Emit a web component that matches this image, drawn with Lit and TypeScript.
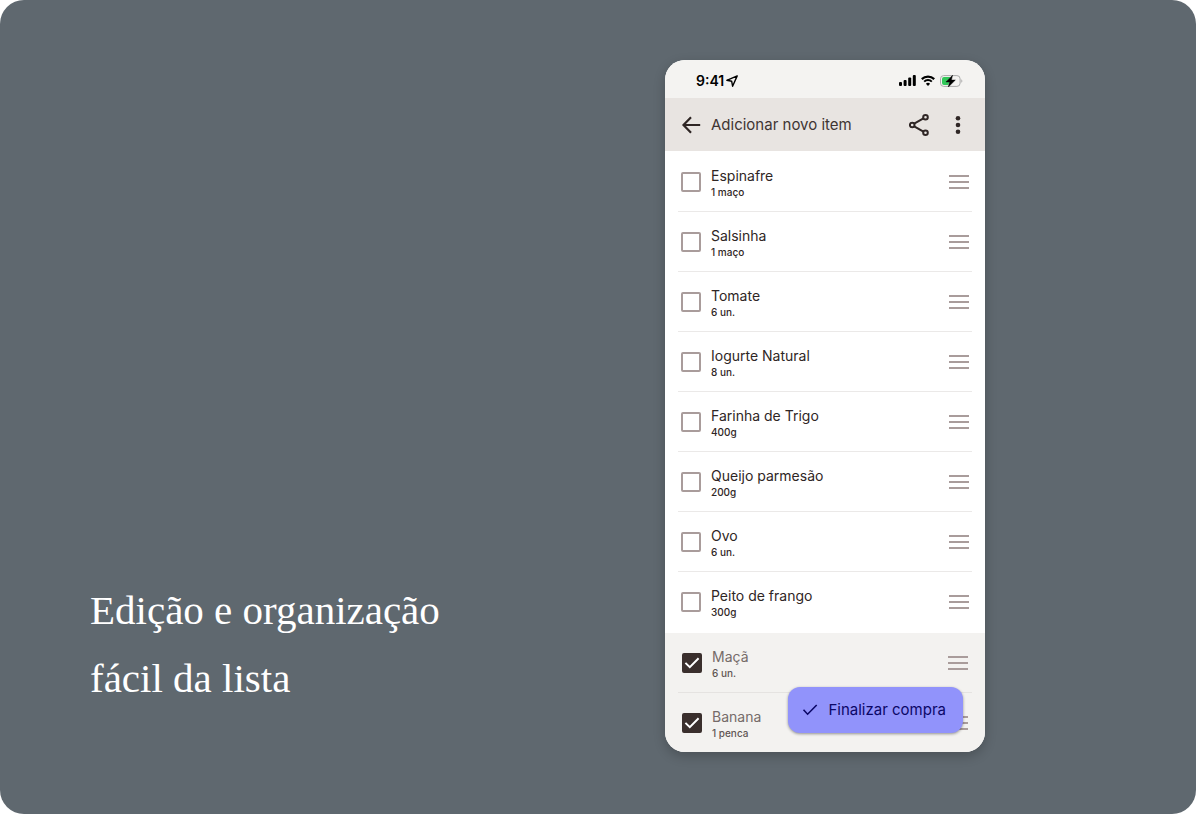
import { LitElement, html, css } from "lit";
import { customElement, property, state } from "lit/decorators.js";

interface Item {
  name: string;
  amount: string;
  done: boolean;
}

const ITEMS: Item[] = [
  { name: "Espinafre", amount: "1 maço", done: false },
  { name: "Salsinha", amount: "1 maço", done: false },
  { name: "Tomate", amount: "6 un.", done: false },
  { name: "Iogurte Natural", amount: "8 un.", done: false },
  { name: "Farinha de Trigo", amount: "400g", done: false },
  { name: "Queijo parmesão", amount: "200g", done: false },
  { name: "Ovo", amount: "6 un.", done: false },
  { name: "Peito de frango", amount: "300g", done: false },
  { name: "Maçã", amount: "6 un.", done: true },
  { name: "Banana", amount: "1 penca", done: true },
];

@customElement("shopping-row")
class ShoppingRow extends LitElement {
  @property({ attribute: false }) item!: Item;

  static styles = css`
    :host {
      display: block;
    }
    .row {
      display: flex;
      align-items: center;
      justify-content: space-between;
      height: 59px;
    }
    .entry {
      display: flex;
      align-items: center;
      gap: 10px;
    }
    .box {
      display: grid;
      place-items: center;
      width: 20px;
      height: 20px;
    }
    .box > * {
      grid-area: 1 / 1;
    }
    .tick {
      appearance: none;
      box-sizing: border-box;
      width: 20px;
      height: 20px;
      margin: 0;
      border: 2px solid #a99c9b;
      border-radius: 2px;
      background: transparent;
    }
    .tick:checked {
      border-color: #3a2f2d;
      background: #3a2f2d;
    }
    .mark {
      pointer-events: none;
    }
    .texts {
      display: flex;
      flex-direction: column;
      padding-top: 2px;
      color: #2f2625;
    }
    .name {
      font-size: 14px;
      line-height: 18px;
    }
    .amount {
      font-size: 10px;
      line-height: 14px;
      font-weight: 500;
    }
    .done {
      color: #756b69;
    }
    .done .amount {
      color: #5f5553;
    }
    .handle {
      display: block;
      padding: 0;
      border: 0;
      background: none;
    }
    .handle svg {
      display: block;
    }
  `;

  render() {
    const { name, amount, done } = this.item;
    return html`
      <div class="row">
        <label class="entry">
          <span class="box">
            <input
              class="tick"
              type="checkbox"
              .checked=${done}
              @change=${this.toggle}
            />
            ${done
              ? html`<svg class="mark" width="20" height="20" viewBox="0 0 20 20" fill="none" aria-hidden="true">
                  <path d="M3.4 9.9 7.800 14.200 16.600 5.300" stroke="#fff" stroke-width="2" />
                </svg>`
              : ""}
          </span>
          <span class="texts ${done ? "done" : ""}">
            <span class="name">${name}</span>
            <span class="amount">${amount}</span>
          </span>
        </label>
        <button class="handle" aria-label="Mover ${name}">
          <svg width="20" height="14" viewBox="0 0 20 14" aria-hidden="true">
            <path d="M0 0h20v2H0zM0 6h20v2H0zM0 12h20v2H0z" fill="#a99c9b" />
          </svg>
        </button>
      </div>
    `;
  }

  private toggle() {
    this.dispatchEvent(new CustomEvent("toggle-item", { detail: this.item }));
  }
}

@customElement("app-root")
class AppRoot extends LitElement {
  @state() private items: Item[] = ITEMS;

  static styles = css`
    :host {
      display: block;
      background: #fff;
      font-family: Inter, "Noto Sans", sans-serif;
    }
    .stage {
      box-sizing: border-box;
      display: flex;
      justify-content: space-between;
      align-items: center;
      gap: 40px;
      min-height: 100vh;
      padding: 60px 211px 62px 90px;
      border-radius: 24px;
      background: #5f686f;
    }
    .title {
      align-self: flex-end;
      max-width: 400px;
      margin: 0 0 40px;
      color: #fff;
      font: 400 41px/68px "Liberation Serif", serif;
    }
    .phone {
      position: relative;
      flex: none;
      width: 320px;
      border-radius: 20px;
      overflow: hidden;
      background: #fff;
      box-shadow: 0 4px 12px rgba(0, 0, 0, 0.22);
    }
    .status {
      display: flex;
      align-items: center;
      justify-content: space-between;
      height: 38px;
      padding: 3px 22px 0 31px;
      box-sizing: border-box;
      background: #f4f3f1;
      color: #000;
      font-size: 14px;
      font-weight: 600;
    }
    .cluster {
      display: flex;
      align-items: center;
      gap: 5px;
    }
    .clock {
      gap: 2px;
    }
    .bar {
      display: flex;
      align-items: center;
      height: 53px;
      padding: 0 17px 0 16px;
      box-sizing: border-box;
      background: #e8e4e1;
    }
    .bar input {
      flex: 1;
      min-width: 0;
      margin: 0 10px;
      padding: 0;
      border: 0;
      outline: 0;
      background: none;
      color: #3f3533;
      font: 400 15px/20px Inter, "Noto Sans", sans-serif;
    }
    .bar input::placeholder {
      color: #3f3533;
      opacity: 1;
    }
    .icon {
      display: grid;
      place-items: center;
      width: 20px;
      height: 24px;
      padding: 0;
      border: 0;
      background: none;
    }
    .actions {
      display: flex;
      gap: 19px;
    }
    .list {
      margin: 0;
      padding: 1px 13px;
      list-style: none;
    }
    .list li {
      padding: 0 3px;
      border-bottom: 1px solid #ebe9e8;
    }
    .list li:last-child {
      border-color: transparent;
    }
    .list.checked {
      padding: 0 13px;
      background: #f3f2f0;
    }
    .checked li {
      padding: 0 4px;
      border-color: #e5e3e1;
    }
    .checked li:last-child {
      border: 0;
    }
    .finish {
      position: absolute;
      right: 22px;
      bottom: 19px;
      display: flex;
      align-items: center;
      gap: 10px;
      height: 46px;
      padding: 0 17px 0 14px;
      border: 0;
      border-radius: 12px;
      background: #9193fb;
      color: #0b0767;
      font: 400 15px/20px Inter, "Noto Sans", sans-serif;
      box-shadow: 0 1px 3px rgba(0, 0, 0, 0.4);
    }
  `;

  render() {
    const open = this.items.filter((i) => !i.done);
    const done = this.items.filter((i) => i.done);
    return html`
      <main class="stage">
        <h1 class="title">Edição e organização<br />fácil da lista</h1>
        <section class="phone">
          <div class="status">
            <div class="cluster clock">
              <span>9:41</span>
              <svg width="12" height="12" viewBox="0 0 12 12" fill="none" aria-hidden="true">
                <path d="M11.200.9.800 5.300l4.900 1 .9 4.900z" stroke="#000" stroke-width="1.400" stroke-linejoin="round" />
              </svg>
            </div>
            <div class="cluster">
              <svg width="17" height="11" viewBox="0 0 17 11" aria-hidden="true">
                <rect x="0" y="7" width="3" height="4" rx="1" />
                <rect x="4.6" y="5" width="3" height="6" rx="1" />
                <rect x="9.2" y="2.5" width="3" height="8.5" rx="1" />
                <rect x="13.8" y="0" width="3" height="11" rx="1" />
              </svg>
              <svg width="14" height="11" viewBox="0 0 14 11" fill="none" stroke="#000" aria-hidden="true">
                <path d="M.8 4.1a8.8 8.8 0 0 1 12.4 0" stroke-width="2.200" />
                <path d="M3.2 6.6a5.4 5.4 0 0 1 7.6 0" stroke-width="2" />
                <path d="M7 11 4.9 8.7a3 3 0 0 1 4.2 0z" fill="#000" stroke="none" />
              </svg>
              <svg width="23" height="12" viewBox="0 0 23 12" fill="none" aria-hidden="true">
                <rect x=".5" y=".6" width="19.6" height="10.8" rx="3.2" stroke="#aaa" />
                <path d="M4 2h6.500L7 6.300h2.500L8.300 10H4a2 2 0 0 1-2-2V4a2 2 0 0 1 2-2z" fill="#32c759" />
                <path d="M21.300 4.200v3.600c1.400-.6 1.400-3 0-3.600z" fill="#aaa" />
                <path d="M12.500.3 6 6.900h3.600L8.300 12l7-6.900h-3.900z" fill="#000" stroke="#000" stroke-width=".5" />
              </svg>
            </div>
          </div>
          <header class="bar">
            <button class="icon" aria-label="Voltar">
              <svg width="20" height="20" viewBox="0 0 20 20" fill="none" aria-hidden="true">
                <path d="M10 2.300 2.500 10l7.500 7.700M2.500 10h16.700" stroke="#2f2625" stroke-width="2.200" />
              </svg>
            </button>
            <input type="text" aria-label="Adicionar novo item" placeholder="Adicionar novo item" />
            <div class="actions">
              <button class="icon" aria-label="Compartilhar">
                <svg width="20" height="22" viewBox="0 0 20 22" fill="none" stroke="#2f2625" stroke-width="2" aria-hidden="true">
                  <path d="m5.200 9.700 9.200-5.300M5.200 12.300l9.200 5.300" />
                  <circle cx="3.200" cy="11" r="2.300" />
                  <circle cx="16.500" cy="3.300" r="2.300" />
                  <circle cx="16.500" cy="18.700" r="2.300" />
                </svg>
              </button>
              <button class="icon" aria-label="Mais opções">
                <svg width="6" height="18" viewBox="0 0 6 18" fill="#2f2625" aria-hidden="true">
                  <circle cx="3" cy="2.300" r="2.300" />
                  <circle cx="3" cy="9" r="2.300" />
                  <circle cx="3" cy="15.700" r="2.300" />
                </svg>
              </button>
            </div>
          </header>
          <ul class="list">
            ${open.map((item) => this.row(item))}
          </ul>
          <ul class="list checked">
            ${done.map((item) => this.row(item))}
          </ul>
          <button class="finish">
            <svg width="16" height="14" viewBox="0 0 16 14" fill="none" aria-hidden="true">
              <path d="m1.500 6.800 4.100 4.400L14.700 2" stroke="#0b0767" stroke-width="1.600" />
            </svg>
            Finalizar compra
          </button>
        </section>
      </main>
    `;
  }

  private row(item: Item) {
    return html`<li>
      <shopping-row .item=${item} @toggle-item=${() => this.toggle(item)}></shopping-row>
    </li>`;
  }

  private toggle(item: Item) {
    this.items = this.items.map((i) => (i === item ? { ...i, done: !i.done } : i));
  }
}
